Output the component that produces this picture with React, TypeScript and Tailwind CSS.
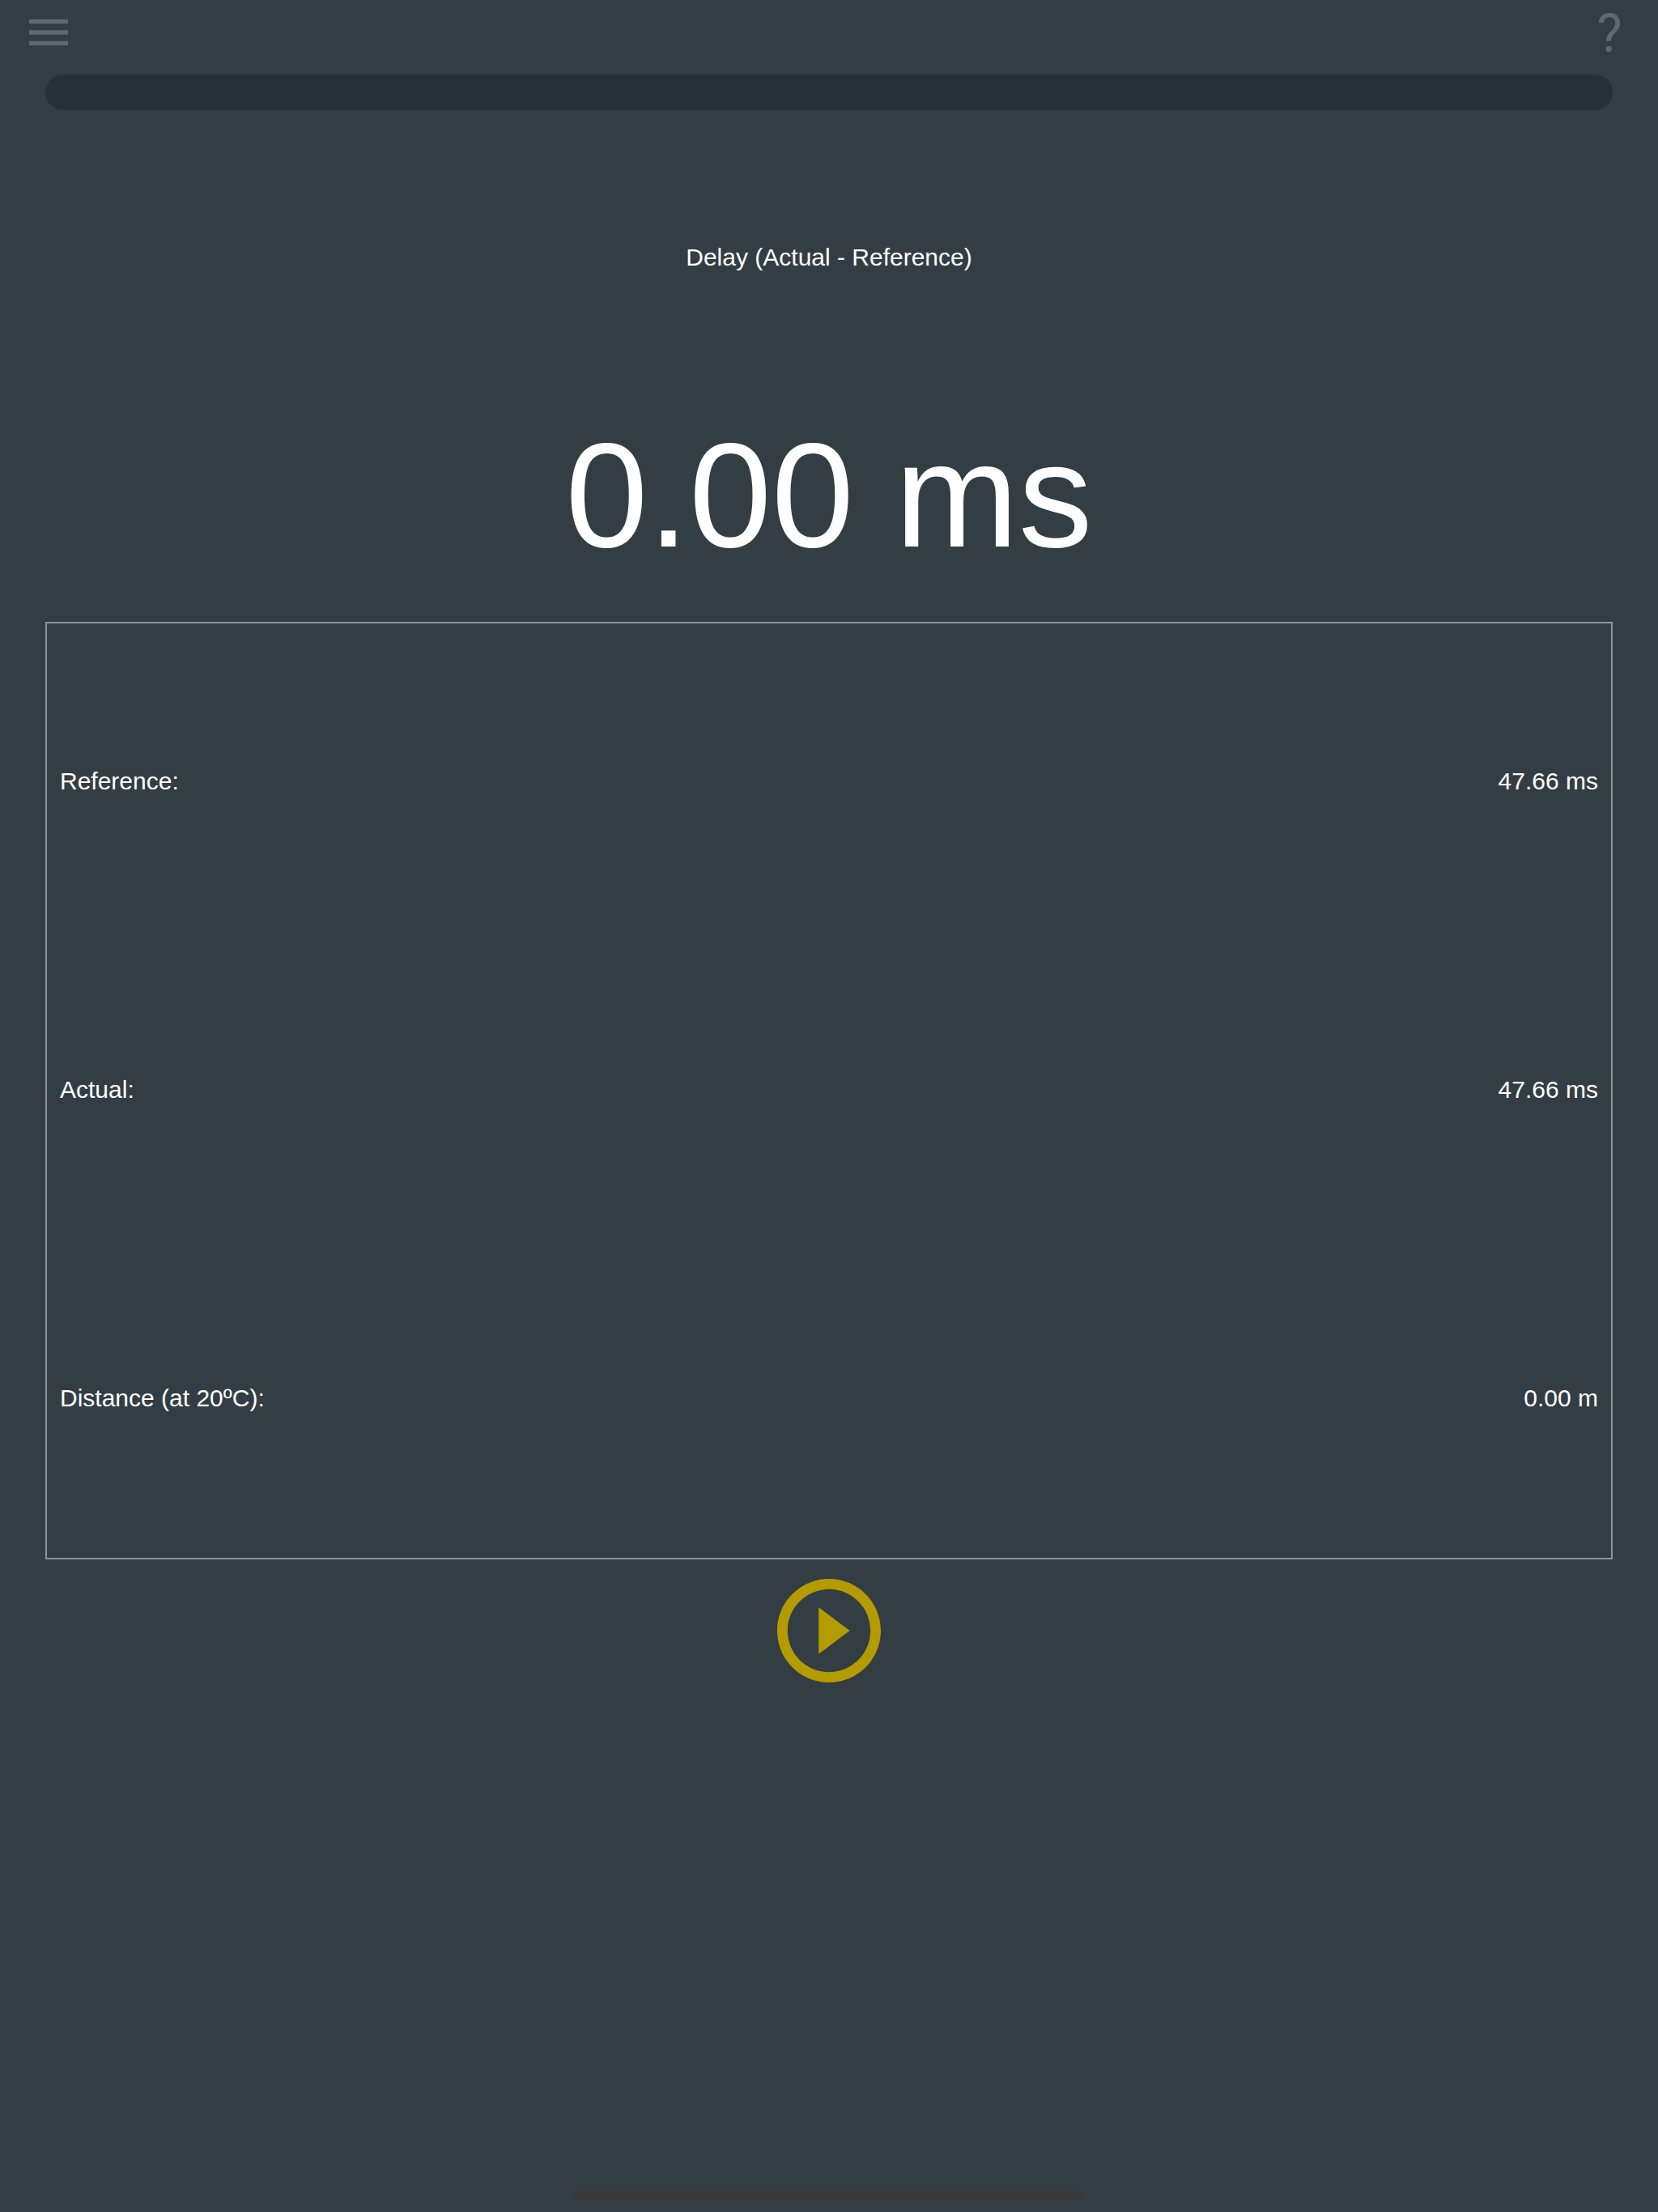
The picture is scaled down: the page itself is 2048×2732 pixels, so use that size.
const readings = [
  { label: "Reference:", value: "47.66 ms" },
  { label: "Actual:", value: "47.66 ms" },
  { label: "Distance (at 20ºC):", value: "0.00 m" },
];

function MenuIcon() {
  return (
    <svg viewBox="0 0 18 12" className="h-8 w-12 fill-current" aria-hidden="true">
      <path d="M0 0h18v2H0zM0 5h18v2H0zM0 10h18v2H0z" />
    </svg>
  );
}

function HelpIcon() {
  return (
    <svg viewBox="0 0 48 48" className="size-12 fill-current" aria-hidden="true">
      <path d="M11 12C11 4.5 16.5 0 24 0c8 0 13.2 4.8 13.2 12.5C37.2 23 26.3 25 26.1 34.7H20C20 23 31.2 21.5 31.2 12.5c0-4.5-2.700-7.200-7.200-7.200-4.200 0-7 2.500-7 6.700z" />
      <circle cx="23.3" cy="44.4" r="3.6" />
    </svg>
  );
}

function PlayIcon() {
  return (
    <svg viewBox="0 0 20 20" className="size-32 fill-current" aria-hidden="true">
      <path d="M8 14.5l6-4.5-6-4.5zM10 0C4.480 0 0 4.480 0 10s4.480 10 10 10 10-4.480 10-10S15.520 0 10 0zm0 18c-4.410 0-8-3.590-8-8s3.590-8 8-8 8 3.590 8 8-3.590 8-8 8z" />
    </svg>
  );
}

export default function App() {
  return (
    <div className="flex min-h-screen flex-col bg-[#333e44] font-['Liberation_Sans',Arial,sans-serif] text-[30px] leading-[37px] text-white">
      <header className="flex items-start justify-between px-9 pt-4 pb-7 text-[#5c696f]">
        <button type="button" aria-label="Menu" className="py-2">
          <MenuIcon />
        </button>
        <button type="button" aria-label="Help">
          <HelpIcon />
        </button>
      </header>

      <main className="flex flex-col px-14">
        <div className="h-11 rounded-full bg-[#273238]" role="presentation" />

        <h1 className="pt-[163px] text-center">Delay (Actual - Reference)</h1>
        <p className="pt-[184px] pb-16 text-center text-[183px] leading-[184px]">0.00 ms</p>

        <dl className="border-2 border-[#8b9799] px-4 pt-1 pb-[7px]">
          {readings.map((reading) => (
            <div key={reading.label} className="flex justify-between py-[172px]">
              <dt>{reading.label}</dt>
              <dd>{reading.value}</dd>
            </div>
          ))}
        </dl>

        <button type="button" aria-label="Start" className="mt-6 self-center rounded-full text-[#b39b00]">
          <PlayIcon />
        </button>
      </main>

      <footer className="mt-auto flex justify-center pb-[15px]">
        <div className="h-[11px] w-[630px] max-w-full rounded-full bg-[#3b3838]" />
      </footer>
    </div>
  );
}
